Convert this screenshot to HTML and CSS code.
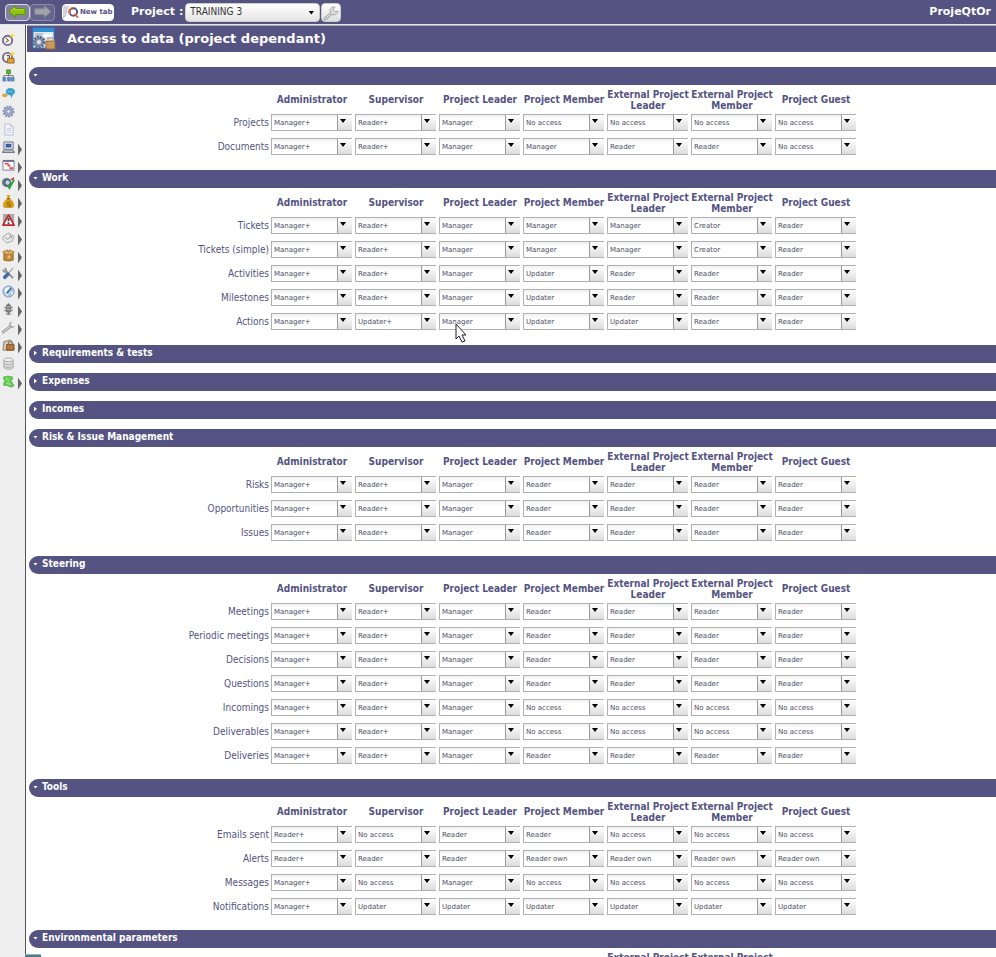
FILE: index.html
```html
<!DOCTYPE html>
<html lang="en">
<head>
<meta charset="utf-8">
<title>ProjeQtOr</title>
<link rel="stylesheet" href="styles.css">
</head>
<body>
<header class="topbar">
  <button class="nav-btn nav-back" aria-label="Back"><svg viewBox="0 0 20 14"><path d="M1 7 8 1v3h10v6H8v3z" fill="#8dc40a" stroke="#5b9400"/><path d="M3 6 7 3v2h10" fill="none" stroke="#b6df3d"/></svg></button>
  <button class="nav-btn nav-next" aria-label="Forward"><svg viewBox="0 0 20 14"><path d="M19 7 12 1v3H2v6h10v3z" fill="#a2a2a9" stroke="#88889a"/></svg></button>
  <button class="newtab"><svg viewBox="0 0 18 14"><path d="M0 0h5C3 4 3 12 0 14z" fill="#d5d5de"/><path d="M0 13C4 13 3 1 7 1" fill="none" stroke="#b0b0c0"/><circle cx="11" cy="7" r="4" fill="none" stroke="#55527f" stroke-width="2"/><path d="M7 9a4 4 0 0 1 3-6" fill="none" stroke="#d9653b" stroke-width="2"/><path d="m12 9 4 4" stroke="#d9653b" stroke-width="2"/></svg>New tab</button>
  <label class="project-label" for="project">Project :</label>
  <span class="project-box"><select id="project"><option>TRAINING 3</option></select></span>
  <button class="tool-btn" aria-label="Project settings"><svg viewBox="0 0 16 16"><path d="M2 14 10 7" stroke="#aaa" stroke-width="3" stroke-linecap="round"/><path d="M2 14 10 7" stroke="#eee" stroke-linecap="round"/><path d="M12 2a4 4 0 1 0 3 4l-3 1-2-2z" fill="#ddd" stroke="#aaa"/></svg></button>
  <span class="brand">ProjeQtOr</span>
</header>
<div class="frame">
  <nav class="side" aria-label="Menu">
    <a href="#" aria-label="Today"><svg viewBox="0 0 14 14"><circle cx="6" cy="8" r="5" fill="#f6f3ea" stroke="#77698f" stroke-width="2"/><path d="M4 5l3 3-3 2" fill="none" stroke="#333"/><path d="m11 0 1 2 2 1-2 1-1 2-1-2-2-1 2-1z" fill="#ffd93a"/></svg></a>
    <a href="#" aria-label="Workload"><svg viewBox="0 0 14 14"><circle cx="6" cy="7" r="5" fill="#f6f3ea" stroke="#77698f" stroke-width="2"/><path d="M6 8h7v5H6z" fill="#dda23c" stroke="#9d6a1c"/><path d="M5 5h3v3" fill="none" stroke="#333"/><path d="m11 0 1 2 2 1-2 1-1 2-1-2-2-1 2-1z" fill="#ffd93a"/></svg></a>
    <a href="#" aria-label="Projects"><svg viewBox="0 0 14 14"><path d="M7 4v4M2 9V7h10v2" fill="none" stroke="#777"/><path d="M5 1h4v4H5z" fill="#5fb83c" stroke="#3f8a28"/><path d="M1 9h3v4H1zM6 9h3v4H6zM10 9h3v4h-3z" fill="#4f8fca" stroke="#6a86b5"/></svg></a>
    <a href="#" aria-label="Messages"><svg viewBox="0 0 14 14"><ellipse cx="9" cy="5" rx="5" ry="4" fill="#3aa0cc"/><path d="M9 8l1 4 2-4z" fill="#3aa0cc"/><ellipse cx="3" cy="9" rx="3" ry="2" fill="#e0a33d"/><path d="M6 5h6" stroke="#bfe4f5" stroke-dasharray="1 1"/></svg></a>
    <a href="#" aria-label="Processes"><svg viewBox="0 0 14 14"><circle cx="7" cy="7" r="5" fill="#b4bfd8" stroke="#8c99ba" stroke-width="3" stroke-dasharray="2 1"/><circle cx="7" cy="7" r="4" fill="#b4bfd8" stroke="#8290b5"/><circle cx="7" cy="7" r="2" fill="#eee" stroke="#76849f"/></svg></a>
    <a href="#" aria-label="Documents"><svg viewBox="0 0 14 14"><path d="M3 1h6l3 3v9H3z" fill="#f3f4fb" stroke="#b9bdd4"/><path d="M9 1v3h3M5 6h5M5 8h5M5 10h5" fill="none" stroke="#c6cadd"/></svg></a>
    <a href="#" class="more" aria-label="Work"><svg viewBox="0 0 14 14"><path d="M2 1h10v8H2z" fill="#e1e3ea" stroke="#666d80"/><path d="M4 3h6v4H4z" fill="#345f9f"/><path d="M1 10h12l1 3H0z" fill="#737989"/><path d="M2 11h10" stroke="#ddd"/></svg></a>
    <a href="#" class="more" aria-label="Planning"><svg viewBox="0 0 14 14"><path d="M1 2h12v10H1z" fill="#fff" stroke="#777a96"/><path d="M1 2h12" stroke="#686c92" stroke-width="2"/><path d="M3 5h4M6 7h3M8 10h4" stroke="#e14a50" stroke-width="2"/></svg></a>
    <a href="#" class="more" aria-label="Follow-up"><svg viewBox="0 0 14 14"><ellipse cx="5" cy="6" rx="5" ry="5" fill="#6b7582"/><circle cx="6" cy="6" r="3" fill="#b9d8f2" stroke="#33475f"/><path d="m6 9 2 3 5-9" fill="none" stroke="#31a038" stroke-width="2"/><path d="m10 3 3-2" stroke="#c24545" stroke-width="2"/></svg></a>
    <a href="#" class="more" aria-label="Financial"><svg viewBox="0 0 14 14"><path d="M5 0h4L8 3v1c3 1 5 4 5 7 0 2-1 3-3 3H4c-2 0-3-1-3-3 0-3 2-6 5-7V3z" fill="#d5a016"/><path d="M5 4h4" stroke="#7b5708"/><path d="M9 8H6v2h3v2H5" fill="none" stroke="#8f6507"/></svg></a>
    <a href="#" class="more" aria-label="Risks"><svg viewBox="0 0 14 14"><path d="M1 1h5v12H1zM8 1h5v12H8z" fill="#aaa"/><path d="m7 2 6 11H1z" fill="#fff" stroke="#c22a30" stroke-width="2" stroke-linejoin="round"/><path d="M7 5v4M7 10v2" stroke="#444" stroke-width="2"/></svg></a>
    <a href="#" class="more" aria-label="Review"><svg viewBox="0 0 14 14"><path d="m1 6 6-4 6 4-2 5-6 2-4-4z" fill="#e7e7e4" stroke="#aaa"/><path d="m3 7 3 2 5-4M8 4l3 4" fill="none" stroke="#999"/></svg></a>
    <a href="#" class="more" aria-label="Products"><svg viewBox="0 0 14 14"><path d="M2 5h10v7l-5 1-5-1z" fill="#bf8736" stroke="#9c6a25"/><path d="m2 5-1-2 5-2 1 3 1-3 5 2-1 2-5 1z" fill="#dfb36c" stroke="#a5772f"/><path d="M6 7h3v3H6z" fill="#e3bb7a"/></svg></a>
    <a href="#" class="more" aria-label="Tools"><svg viewBox="0 0 14 14"><path d="m3 3 9 9" stroke="#8d8d8d" stroke-width="2"/><path d="M1 3a3 3 0 0 0 4 2M3 1l2 3" fill="none" stroke="#999" stroke-width="2"/><path d="m12 1-6 7" stroke="#777"/><path d="m6 8-3 3" stroke="#3e6cab" stroke-width="4" stroke-linecap="round"/></svg></a>
    <a href="#" class="more" aria-label="Environment"><svg viewBox="0 0 14 14"><circle cx="7" cy="7" r="6" fill="#a9c8e6" stroke="#7c97b7"/><path d="M3 4l4-2 3 3-3 3-1 4-3-4zM9 8l3-1-1 4z" fill="#f4f8fb"/><path d="m5 9 5-6" stroke="#4576b0" stroke-width="2"/></svg></a>
    <a href="#" class="more" aria-label="Automation"><svg viewBox="0 0 14 14"><path d="M7 0 10 3v7H4V3zM6 9h2v4H6z" fill="#777"/><path d="M2 5h10M2 8h10M4 12h6" fill="none" stroke="#888"/><path d="M5 4h4M5 7h4" stroke="#bbb"/></svg></a>
    <a href="#" class="more" aria-label="Parameters"><svg viewBox="0 0 14 14"><path d="M1 12 9 6" stroke="#999" stroke-width="3" stroke-linecap="round"/><path d="M1 12 9 6" stroke="#eee" stroke-linecap="round"/><path d="M10 1a3 3 0 1 0 3 5l-3 0-1-2z" fill="#ddd" stroke="#aaa"/></svg></a>
    <a href="#" class="more" aria-label="Access rights"><svg viewBox="0 0 14 14"><path d="M2 3 9 1l3 4v7H1z" fill="#d7c8b6" stroke="#8d7c6b"/><path d="M5 6h8v6H5z" fill="#b97836" stroke="#7e5125"/><path d="M7 6V3h4v3" fill="none" stroke="#777"/></svg></a>
    <a href="#" aria-label="Data"><svg viewBox="0 0 14 14"><path d="M2 3v8c0 3 10 3 10 0V3" fill="#ddd" stroke="#aaa"/><ellipse cx="7" cy="3" rx="5" ry="2" fill="#eee" stroke="#aaa"/><path d="M2 6c0 3 10 3 10 0M2 9c0 3 10 3 10 0" fill="none" stroke="#aaa"/></svg></a>
    <a href="#" class="more" aria-label="Plugins"><svg viewBox="0 0 14 14"><path d="M2 2h3l1-1 2 1h3v3l-2 1 2 2v2l2 1-2 2-4-1-2-1H2V8l2-1-2-2z" fill="#6bd15a" stroke="#48a93b"/><path d="M4 3l4 4M5 9l4 1" stroke="#a9f098"/></svg></a>
  </nav>
  <main class="content">
    <div class="titlebar">
      <svg class="title-icon" viewBox="0 0 24 24"><path d="M1 1h21v20H1z" fill="#dfeaf3" stroke="#2d7dbd"/><path d="M1 1h21v4H1z" fill="#2f8fd3"/><path d="M3 7h8M3 9h6" stroke="#999"/><path d="M12 7h8v3h-8z" fill="#fff"/><circle cx="7" cy="15" r="5" fill="#8c97b1" stroke="#5d6b8d" stroke-width="3" stroke-dasharray="2 1"/><circle cx="7" cy="15" r="2" fill="#dfe5ee"/><path d="M14 14h9v8h-9z" fill="#c99a5b" stroke="#94693a"/><path d="M16 14v-3h5v3" fill="none" stroke="#bbb" stroke-width="2"/></svg>
      <h1>Access to data (project dependant)</h1>
    </div>
    <div class="sections" id="sections"></div>
  </main>
</div>
<div class="hint"></div>
<svg class="pointer" viewBox="0 0 12 20"><path d="M1 1v15l3-3 3 6 3-1-3-6h4z" fill="#fff" stroke="#1d1d30"/></svg>
<script src="script.js"></script>
</body>
</html>
```
FILE: styles.css
```css
* { box-sizing: border-box; }
body {
  margin: 0;
  height: 100vh;
  overflow: hidden;
  display: flex;
  flex-direction: column;
  background: #fff;
  color: #545381;
  font: 10px/12px "DejaVu Sans Condensed", "DejaVu Sans", sans-serif;
}
button { padding: 0; font: inherit; }
button svg { display: block; }

.topbar {
  flex: none;
  height: 25px;
  display: flex;
  align-items: center;
  padding: 0 5px;
  background: #545381;
  border-bottom: 1px solid #e4e4e4;
  color: #fff;
}
.nav-btn {
  width: 25px;
  height: 17px;
  padding: 0 2px;
  border: 1px solid #d9d9e0;
  border-radius: 4px;
  background: #84839f;
}
.nav-next { border-color: #8d8ca8; background: #66658b; }
.newtab {
  display: flex;
  align-items: center;
  width: 52px;
  height: 17px;
  margin: 0 17px 0 7px;
  overflow: hidden;
  border: 1px solid #fff;
  border-radius: 4px;
  background: #fff;
  color: #545381;
  font: bold 7px/14px "DejaVu Sans", sans-serif;
  white-space: nowrap;
}
.newtab svg { flex: none; width: 17px; height: 14px; }
.project-label { font: bold 11px/16px "DejaVu Sans", sans-serif; white-space: nowrap; }
.project-box, .combo { position: relative; display: block; }
.project-box { width: 135px; margin: 0 1px 0 2px; }
.project-box::after, .combo::after {
  content: "";
  position: absolute;
  top: 5px;
  right: 6px;
  width: 6px;
  height: 4px;
  background: #000;
  clip-path: polygon(0 0, 100% 0, 50% 100%);
  pointer-events: none;
}
.project-box::after { top: 8px; }
select { appearance: none; display: block; width: 100%; margin: 0; outline: 0; }
.project-box select {
  height: 19px;
  padding: 0 4px;
  border: 1px solid #ccc;
  border-radius: 4px;
  background: linear-gradient(#fff, #e4e4e4);
  color: #333;
  font: 10px/16px "DejaVu Sans Condensed", sans-serif;
}
.tool-btn {
  width: 20px;
  height: 19px;
  padding: 1px;
  border: 1px solid #ccc;
  border-radius: 4px;
  background: linear-gradient(#fff, #ddd);
}
.brand { margin-left: auto; font: bold 11px/14px "DejaVu Sans", sans-serif; }

.frame { flex: 1; min-height: 0; display: flex; }
.side {
  flex: none;
  width: 26px;
  padding: 5px 2px;
  background: #eee;
  border-right: 1px solid #555;
}
.side a { display: flex; align-items: center; gap: 3px; height: 18px; }
.side svg { width: 13px; height: 13px; }
.side .more::after {
  content: "";
  width: 4px;
  height: 12px;
  margin-top: 5px;
  background: #666;
  clip-path: polygon(0 0, 100% 50%, 0 100%);
}
.content { flex: 1; min-width: 0; padding-left: 1px; }
.titlebar {
  display: flex;
  align-items: center;
  gap: 11px;
  height: 27px;
  padding-left: 5px;
  background: #545381;
  border-top: 1px solid #a9a9b5;
}
.title-icon { width: 24px; height: 24px; }
h1 { margin: 0; color: #fff; font: bold 13px/18px "DejaVu Sans", sans-serif; }
.sections { display: flex; flex-direction: column; gap: 10px; padding: 15px 0 0 2px; }
h2 { margin: 0; font: inherit; }
.bar {
  display: flex;
  align-items: center;
  gap: 4px;
  width: 100%;
  height: 18px;
  padding: 0 4px 2px;
  border: 0;
  border-radius: 9px 0 0 9px;
  background: #545381;
  color: #fff;
  font: bold 10px/14px "DejaVu Sans Condensed", sans-serif;
}
.bar::before {
  content: "";
  width: 5px;
  height: 3px;
  background: #fff;
  clip-path: polygon(0 0, 100% 0, 50% 100%);
}
.bar[aria-expanded="false"]::before {
  height: 5px;
  clip-path: polygon(20% 0, 80% 50%, 20% 100%);
}
table { table-layout: fixed; width: 829px; border-collapse: collapse; }
.names { width: 241px; }
th, td { padding: 0; }
thead th { height: 27px; padding-top: 2px; font-weight: bold; line-height: 11px; }
tbody tr { height: 24px; }
tbody th { padding: 0 1px 2px 0; font-weight: normal; text-align: right; }
td { padding: 2px 2px 5px 1px; vertical-align: top; }
.combo select {
  height: 17px;
  padding: 0 16px 0 2px;
  border: solid #b0b0b0;
  border-width: 1px 0 1px 1px;
  border-radius: 0;
  background:
    linear-gradient(#999, #999) right 14px top / 1px 100% no-repeat,
    linear-gradient(#fff, #ddd) right top / 14px 100% no-repeat,
    linear-gradient(#f1f1f1, #fff 5px);
  color: #4c4b66;
  font: 7px/14px "DejaVu Sans", sans-serif;
}
.hint {
  position: absolute;
  left: 25px;
  bottom: 0;
  width: 16px;
  height: 3px;
  background: #4b7d84;
  border-top: 1px solid #9ab5b9;
}
.pointer { position: absolute; left: 455px; top: 323px; width: 12px; height: 20px; pointer-events: none; }
```
FILE: script.js
```js
const profiles = ["Administrator", "Supervisor", "Project Leader", "Project Member",
  "External Project Leader", "External Project Member", "Project Guest"];

const levels = { "M+": "Manager+", "R+": "Reader+", "U+": "Updater+", M: "Manager", R: "Reader",
  U: "Updater", C: "Creator", N: "No access", O: "Reader own" };

// Each right is "label: one level code per profile"; a section without rights is folded.
const sections = [
  ["", ["Projects: M+ R+ M N N N N", "Documents: M+ R+ M M R R N"]],
  ["Work", ["Tickets: M+ R+ M M M C R", "Tickets (simple): M+ R+ M M M C R",
    "Activities: M+ R+ M U R R R", "Milestones: M+ R+ M U R R R", "Actions: M+ U+ M U U R R"]],
  ["Requirements & tests"],
  ["Expenses"],
  ["Incomes"],
  ["Risk & Issue Management", ["Risks: M+ R+ M R R R R", "Opportunities: M+ R+ M R R R R",
    "Issues: M+ R+ M R R R R"]],
  ["Steering", ["Meetings: M+ R+ M R R R R", "Periodic meetings: M+ R+ M R R R R",
    "Decisions: M+ R+ M R R R R", "Questions: M+ R+ M R R R R", "Incomings: M+ R+ M N N N N",
    "Deliverables: M+ R+ M N N N N", "Deliveries: M+ R+ M R R R R"]],
  ["Tools", ["Emails sent: R+ N R R N N N", "Alerts: R+ R R O O O O",
    "Messages: M+ N M N N N N", "Notifications: M+ U U U U U U"]],
  ["Environmental parameters", []]
];

function make(tag, parent, text) {
  const node = document.createElement(tag);
  if (text) node.textContent = text;
  parent.append(node);
  return node;
}

const root = document.getElementById("sections");
sections.forEach(([title, rights]) => {
  const section = make("section", root);
  const bar = make("button", make("h2", section), title);
  bar.className = "bar";
  bar.setAttribute("aria-expanded", String(Boolean(rights)));
  if (!title) bar.setAttribute("aria-label", "General");
  if (!rights) return;

  const table = make("table", section);
  const head = make("tr", make("thead", table));
  make("td", head).className = "names";
  profiles.forEach((name) => { make("th", head, name).scope = "col"; });

  const body = make("tbody", table);
  rights.forEach((right) => {
    const [label, codes] = right.split(": ");
    const row = make("tr", body);
    make("th", row, label).scope = "row";
    codes.split(" ").forEach((code, i) => {
      const combo = make("span", make("td", row));
      combo.className = "combo";
      const select = make("select", combo);
      select.setAttribute("aria-label", label + ", " + profiles[i]);
      Object.values(levels).forEach((level) => {
        make("option", select, level).selected = level === levels[code];
      });
    });
  });
});
```
